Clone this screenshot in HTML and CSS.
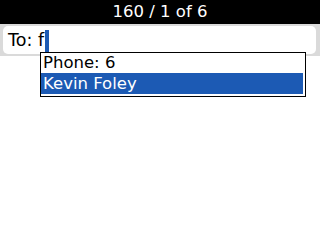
FILE: index.html
```html
<!DOCTYPE html>
<html>
  <head>
    <meta charset="UTF-8"/>
    <title>compose</title>
    <link rel="stylesheet" href="styles.css">
  </head>
  <body>
    <div class="titlebar">160 / 1 of 6</div>
    <div class="tobar">
      <div class="field"><span class="label">To: f</span><span class="cursor"></span></div>
      <div class="suggest">
        <div class="row">Phone: 6</div>
        <div class="row selected">Kevin Foley</div>
      </div>
    </div>
  </body>
</html>
```
FILE: styles.css
```css
body {
  margin: 0;
  width: 320px;
  height: 240px;
  background-color: #ffffff;
  font-family: "DejaVu Sans", sans-serif;
  font-size: 16px;
  color: #000000;
  overflow: hidden;
}

.titlebar {
  background-color: #000000;
  color: #ffffff;
  height: 24px;
  line-height: 24px;
  text-align: center;
  font-size: 16.5px;
}

.tobar {
  position: relative;
  background-color: #dadada;
  height: 32px;
  padding: 2px 4px 0 3px;
  box-sizing: border-box;
}

.field {
  background-color: #ffffff;
  border-radius: 5px;
  height: 28px;
  display: flex;
  align-items: center;
  padding-left: 5px;
  font-size: 17.5px;
}

.cursor {
  display: inline-block;
  width: 4px;
  height: 23px;
  margin-left: 1px;
  margin-top: 2px;
  background-color: #1c5ab4;
}

/* dropdown of matches */
.suggest {
  position: absolute;
  left: 40px;
  top: 28px;
  width: 262px;
  border: 1px solid #000000;
  background-color: #ffffff;
  padding: 0 2px 2px 0;
}

.row {
  height: 20px;
  line-height: 20px;
  padding-left: 2px;
  font-size: 16.5px;
  white-space: nowrap;
}

.selected {
  height: 21px;
  line-height: 21px;
  background-color: #1c5ab4;
  color: #ffffff;
}
```
